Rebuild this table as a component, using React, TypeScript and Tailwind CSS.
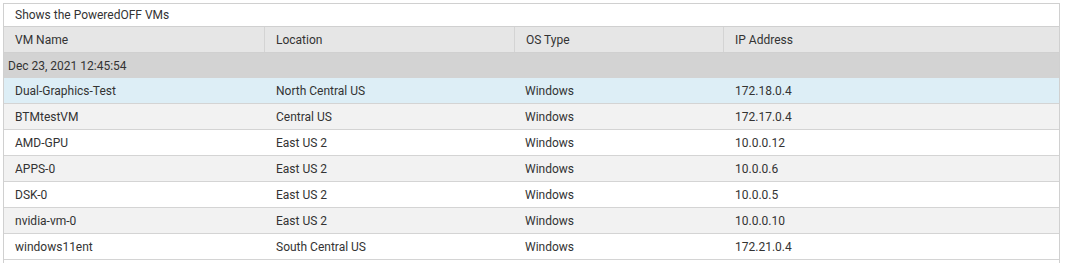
const rows = [
  { name: "Dual-Graphics-Test", location: "North Central US", os: "Windows", ip: "172.18.0.4" },
  { name: "BTMtestVM", location: "Central US", os: "Windows", ip: "172.17.0.4" },
  { name: "AMD-GPU", location: "East US 2", os: "Windows", ip: "10.0.0.12" },
  { name: "APPS-0", location: "East US 2", os: "Windows", ip: "10.0.0.6" },
  { name: "DSK-0", location: "East US 2", os: "Windows", ip: "10.0.0.5" },
  { name: "nvidia-vm-0", location: "East US 2", os: "Windows", ip: "10.0.0.10" },
  { name: "windows11ent", location: "South Central US", os: "Windows", ip: "172.21.0.4" },
];

const cols = ["w-[261px]", "w-[250px]", "w-[209px]", "flex-1"];

export default function App() {
  return (
    <div className="h-[263px] overflow-hidden bg-white pl-[3px] pt-[3px] text-[12px] text-[#333]" style={{ fontFamily: "Roboto, 'Noto Sans', sans-serif" }}>
      <div className="w-[1057px] border-x border-t border-[#d0d0d0]">
        <div className="flex h-[23px] items-center border-b border-[#d0d0d0] pl-[11px]">Shows the PoweredOFF VMs</div>
        <div className="flex h-[26px] border-b border-[#d0d0d0] bg-[#e6e6e6]">
          {["VM Name", "Location", "OS Type", "IP Address"].map((h, i) => (
            <div key={h} className={`${cols[i]} flex items-center pl-[11px] ${i < 3 ? "border-r border-[#d4d4d4]" : ""}`}>
              {h}
            </div>
          ))}
        </div>
        <div className="flex h-[25px] items-center bg-[#d3d3d3] pl-[4px]">Dec 23, 2021 12:45:54</div>
        {rows.map((r, idx) => (
          <div
            key={r.name}
            className={`flex h-[26px] border-b border-[#d4d4d4] ${idx === 0 ? "bg-[#ddeef6]" : idx % 2 === 1 ? "bg-[#f2f2f2]" : "bg-white"}`}
          >
            <div className={`${cols[0]} flex items-center pl-[11px]`}>{r.name}</div>
            <div className={`${cols[1]} flex items-center pl-[11px]`}>{r.location}</div>
            <div className={`${cols[2]} flex items-center pl-[10px]`}>{r.os}</div>
            <div className={`${cols[3]} flex items-center pl-[11px]`}>{r.ip}</div>
          </div>
        ))}
        <div className="h-[20px]" />
      </div>
    </div>
  );
}
